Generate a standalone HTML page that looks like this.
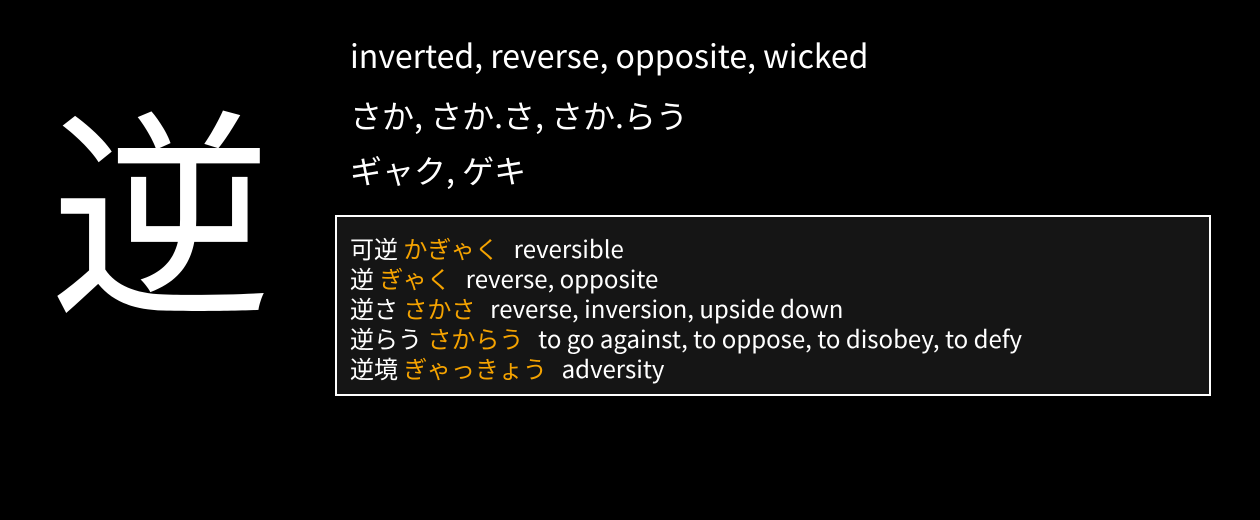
<!DOCTYPE html>
<html><head><meta charset="utf-8"><style>
body{margin:0;width:1260px;height:520px;background:#000;color:#fff;font-family:"Noto Sans CJK JP","Liberation Sans",sans-serif;position:relative;overflow:hidden}
.k{position:absolute;left:50px;top:50px;font-size:222px;line-height:300px}
.t{position:absolute;left:350px;font-size:32px;line-height:40px;white-space:nowrap}
.box{position:absolute;left:335px;top:215px;width:872px;height:177px;border:2px solid #fff;background:#151515;box-sizing:content-box}
.l{position:absolute;left:13px;font-size:24px;line-height:30px;white-space:nowrap}
.o{color:#f5a300;margin-right:4px}
</style></head><body>
<div class="k">逆</div>
<div class="t" style="top:35px">inverted, reverse, opposite, wicked</div>
<div class="t" style="top:95px">さか, さか.さ, さか.らう</div>
<div class="t" style="top:150px">ギャク, ゲキ</div>
<div class="box">
<div class="l" style="top:16px">可逆 <span class="o">かぎゃく</span>&nbsp; reversible</div>
<div class="l" style="top:46px">逆 <span class="o">ぎゃく</span>&nbsp; reverse, opposite</div>
<div class="l" style="top:76px">逆さ <span class="o">さかさ</span>&nbsp; reverse, inversion, upside down</div>
<div class="l" style="top:106px">逆らう <span class="o">さからう</span>&nbsp; to go against, to oppose, to disobey, to defy</div>
<div class="l" style="top:136px">逆境 <span class="o">ぎゃっきょう</span>&nbsp; adversity</div>
</div>
</body></html>
